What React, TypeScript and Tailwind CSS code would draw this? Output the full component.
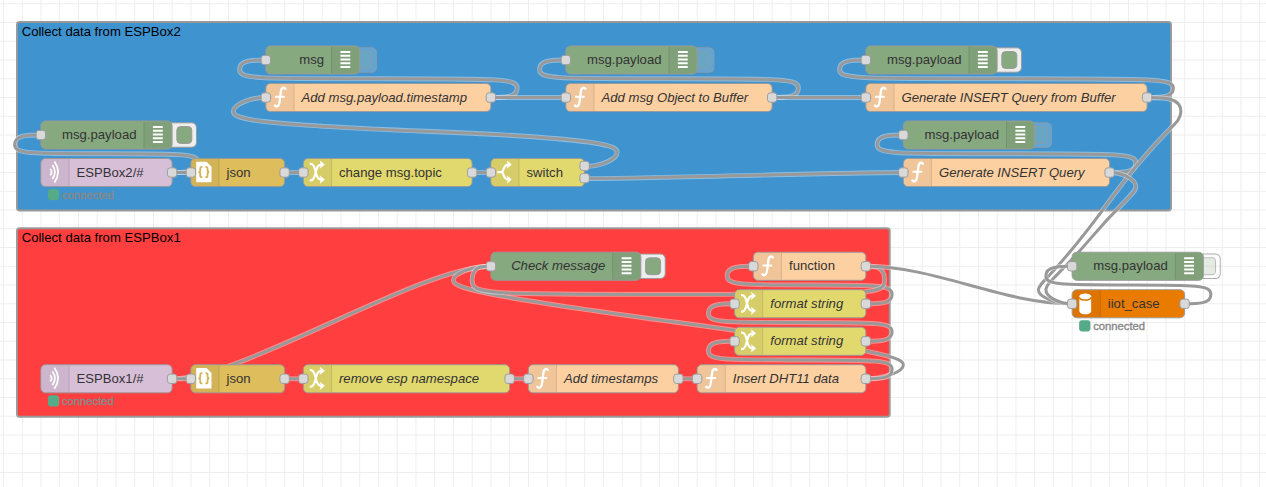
import React from 'react';

type Kind = 'debug' | 'function' | 'mqtt' | 'json' | 'change' | 'switch' | 'db';

interface FlowNode {
  id: string;
  kind: Kind;
  x: number;
  y: number;
  w: number;
  label: string;
  italic?: boolean;
  inputs?: number;
  outputs?: number;
  active?: boolean;
  status?: string;
}

const fills: Record<Kind, string> = {
  debug: 'bg-[#87a980]',
  function: 'bg-[#fdd0a2]',
  mqtt: 'bg-[#d8bfd8]',
  json: 'bg-[#debd5c]',
  change: 'bg-[#e2d96e]',
  switch: 'bg-[#e2d96e]',
  db: 'bg-[#e97b00]',
};

const nodes: FlowNode[] = [
  { id: 'd1', kind: 'debug', x: 280, y: 60, w: 100, label: 'msg', inputs: 1, active: false },
  { id: 'd2', kind: 'debug', x: 600, y: 60, w: 140, label: 'msg.payload', inputs: 1, active: false },
  { id: 'd3', kind: 'debug', x: 920, y: 60, w: 140, label: 'msg.payload', inputs: 1, active: true },
  { id: 'f1', kind: 'function', x: 280, y: 100, w: 240, label: 'Add msg.payload.timestamp', italic: true, inputs: 1, outputs: 1 },
  { id: 'f2', kind: 'function', x: 600, y: 100, w: 220, label: 'Add msg Object to Buffer', italic: true, inputs: 1, outputs: 1 },
  { id: 'f3', kind: 'function', x: 920, y: 100, w: 300, label: 'Generate INSERT Query from Buffer', italic: true, inputs: 1, outputs: 1 },
  { id: 'd4', kind: 'debug', x: 40, y: 140, w: 140, label: 'msg.payload', inputs: 1, active: true },
  { id: 'd5', kind: 'debug', x: 960, y: 140, w: 140, label: 'msg.payload', inputs: 1, active: false },
  { id: 'm2', kind: 'mqtt', x: 40, y: 180, w: 140, label: 'ESPBox2/#', outputs: 1, status: 'connected' },
  { id: 'j2', kind: 'json', x: 200, y: 180, w: 100, label: 'json', inputs: 1, outputs: 1 },
  { id: 'c2', kind: 'change', x: 320, y: 180, w: 180, label: 'change msg.topic', inputs: 1, outputs: 1 },
  { id: 's2', kind: 'switch', x: 520, y: 180, w: 100, label: 'switch', inputs: 1, outputs: 2 },
  { id: 'f4', kind: 'function', x: 960, y: 180, w: 220, label: 'Generate INSERT Query', italic: true, inputs: 1, outputs: 1 },
  { id: 'd6', kind: 'debug', x: 520, y: 280, w: 160, label: 'Check message', italic: true, inputs: 1, active: true },
  { id: 'f5', kind: 'function', x: 800, y: 280, w: 120, label: 'function', inputs: 1, outputs: 1 },
  { id: 'c3', kind: 'change', x: 780, y: 320, w: 140, label: 'format string', italic: true, inputs: 1, outputs: 1 },
  { id: 'c4', kind: 'change', x: 780, y: 360, w: 140, label: 'format string', italic: true, inputs: 1, outputs: 1 },
  { id: 'm1', kind: 'mqtt', x: 40, y: 400, w: 140, label: 'ESPBox1/#', outputs: 1, status: 'connected' },
  { id: 'j1', kind: 'json', x: 200, y: 400, w: 100, label: 'json', inputs: 1, outputs: 1 },
  { id: 'c1', kind: 'change', x: 320, y: 400, w: 220, label: 'remove esp namespace', italic: true, inputs: 1, outputs: 1 },
  { id: 'f6', kind: 'function', x: 560, y: 400, w: 160, label: 'Add timestamps', italic: true, inputs: 1, outputs: 1 },
  { id: 'f7', kind: 'function', x: 740, y: 400, w: 180, label: 'Insert DHT11 data', italic: true, inputs: 1, outputs: 1 },
  { id: 'd7', kind: 'debug', x: 1140, y: 280, w: 140, label: 'msg.payload', inputs: 1, active: false },
  { id: 'db', kind: 'db', x: 1140, y: 320, w: 120, label: 'iiot_case', inputs: 1, outputs: 1, status: 'connected' },
];

// [source, target, output index]
const wires: [string, string, number][] = [
  ['f1', 'd1', 0],
  ['f1', 'f2', 0],
  ['f2', 'd2', 0],
  ['f2', 'f3', 0],
  ['f3', 'd3', 0],
  ['m2', 'd4', 0],
  ['m2', 'j2', 0],
  ['j2', 'c2', 0],
  ['c2', 's2', 0],
  ['s2', 'f1', 0],
  ['s2', 'f4', 1],
  ['f4', 'd5', 0],
  ['m1', 'd6', 0],
  ['m1', 'j1', 0],
  ['j1', 'c1', 0],
  ['c1', 'f6', 0],
  ['f6', 'f7', 0],
  ['f7', 'd6', 0],
  ['f7', 'c4', 0],
  ['c4', 'c3', 0],
  ['c3', 'f5', 0],
  ['f5', 'd6', 0],
  ['f5', 'db', 0],
  ['f3', 'db', 0],
  ['f4', 'db', 0],
  ['db', 'd7', 0],
];

function wirePath(ox: number, oy: number, tx: number, ty: number): string {
  const reach = 100;
  const dx = tx - ox;
  const dy = ty - oy;
  const delta = Math.hypot(dx, dy);
  if (dx > 0) {
    const s = delta < reach ? 0.75 - 0.75 * ((reach - delta) / reach) : 0.75;
    return `M${ox} ${oy} C${ox + reach * s} ${oy} ${tx - reach * s} ${ty} ${tx} ${ty}`;
  }
  const s = 0.4 - 0.2 * Math.max(0, (reach - Math.min(Math.abs(dx), Math.abs(dy))) / reach);
  const midX = Math.floor(tx - dx / 2);
  const midY = dy === 0 ? ty + 30 : Math.floor(ty - dy / 2);
  const h = 15;
  const y1 = (ty + midY) / 2;
  const down = dy > 0;
  const topX = ox + reach * s;
  const topY = down ? Math.min(y1 - dy / 2, oy + h) : Math.max(y1 - dy / 2, oy - h);
  const botX = tx - reach * s;
  const botY = down ? Math.max(y1, ty - h) : Math.min(y1, ty + h);
  const x1 = (ox + topX) / 2;
  const sg = down ? 1 : -1;
  const cp = [
    [x1, oy],
    [topX, down ? Math.max(oy, topY - h) : Math.min(oy, topY + h)],
    [x1, down ? Math.min(midY, topY + h) : Math.max(midY, topY - h)],
    [botX, down ? Math.max(midY, botY - h) : Math.min(midY, botY + h)],
    [(tx + botX) / 2, ty],
  ];
  if (cp[2][1] === topY + sg * h) {
    if (Math.abs(dy) < h * 10) cp[1][1] = topY - (sg * h) / 2;
    cp[3][1] = botY - (sg * h) / 2;
  }
  return `M${ox} ${oy} C${cp[0]} ${cp[1]} ${topX} ${topY} S${cp[2]} ${midX} ${midY} S${cp[3]} ${botX} ${botY} S${cp[4]} ${tx} ${ty}`;
}

const byId = Object.fromEntries(nodes.map((n) => [n.id, n]));

function outputY(n: FlowNode, i: number) {
  return n.outputs === 2 ? n.y - 6.5 + i * 13 : n.y;
}

function Wires() {
  return (
    <svg className="absolute left-0 top-0 overflow-visible" width="1350" height="520" fill="none">
      <g transform="translate(0.5 0.5)">
        {wires.map(([a, b, i], k) => {
          const d = wirePath(byId[a].x + byId[a].w, outputY(byId[a], i), byId[b].x, byId[b].y);
          return (
            <g key={k}>
              <path d={d} stroke="#fff" strokeOpacity="0.4" strokeWidth="5.2" />
              <path d={d} stroke="#999" strokeWidth="3.2" />
            </g>
          );
        })}
      </g>
    </svg>
  );
}

function Icon({ kind }: { kind: Kind }) {
  const common = { width: 30, height: 30, viewBox: '0 0 30 30', fill: 'none', stroke: '#fff', className: 'shrink-0' };
  switch (kind) {
    case 'debug':
      return (
        <svg {...common} strokeWidth="2">
          <path d="M10 7h10.500M10 11h10.500M10 15h10.500M10 19h10.500M10 23h10.500" />
        </svg>
      );
    case 'function':
      return (
        <svg {...common} strokeWidth="2.5">
          <path d="M21.600 6.800C20.400 4.300 17.200 4.200 16.600 8.600L15 20.600C14.400 25.300 11.600 26.400 9.800 23.400" />
          <path d="M10.300 14.700H20.600" strokeWidth="2.200" />
          <circle cx="21.400" cy="6.300" r="1" fill="#fff" stroke="none" />
          <circle cx="10" cy="24" r="1" fill="#fff" stroke="none" />
        </svg>
      );
    case 'mqtt':
      return (
        <svg {...common} strokeWidth="1.900">
          <path d="M10.400 11.500q3.200 3.500 0 7" />
          <path d="M12.700 7.500q5.600 7.500 0 15" />
          <path d="M14.900 3.800q8 11.200 0 22.400" />
        </svg>
      );
    case 'json':
      return (
        <svg {...common}>
          <path d="M6.200 4h11l5.300 5.300v16.700H6.200z" fill="#fff" stroke="none" />
          <path
            d="M12.800 9.500h-.600q-1.700 0-1.700 1.800v1.900q0 1.800-1.900 1.800q1.900 0 1.900 1.800v1.900q0 1.800 1.700 1.800h.600M16 9.500h.600q1.700 0 1.700 1.800v1.900q0 1.800 1.900 1.800q-1.900 0-1.900 1.800v1.900q0 1.800-1.700 1.800H16"
            stroke="#d2b357"
            strokeWidth="1.900"
          />
        </svg>
      );
    case 'change':
      return (
        <svg {...common} strokeWidth="2.300">
          <path d="M7.300 6.200H8.500C12 6.200 12.600 11 13.700 15S15.500 23 19.500 23M7.300 23.800H8.500C12 23.800 12.600 19 13.700 15S15.500 7 19.500 7" />
          <path d="M18 2.600l5.400 4.400-5.400 4.400 1-4.400zM18 18.600l5.400 4.400-5.400 4.400 1-4.400z" fill="#fff" stroke="none" />
        </svg>
      );
    case 'switch':
      return (
        <svg {...common} strokeWidth="2.300">
          <path d="M7.300 15h5.200M19.500 7c-6 0-4.500 5.500-7 8c2.500 2.500 1 8 7 8" />
          <path d="M17.600 2.600l5.200 4.400-5.200 4.400 1-4.400zM17.600 18.600l5.200 4.400-5.200 4.400 1-4.400z" fill="#fff" stroke="none" />
        </svg>
      );
    case 'db':
      return (
        <svg {...common} stroke="none" fill="#fff">
          <ellipse cx="14.500" cy="7.600" rx="6.300" ry="3.100" />
          <path d="M8.200 9.800q1 2.600 6.300 2.600t6.300-2.600v13.900q-1 3-6.300 3t-6.300-3z" />
        </svg>
      );
  }
}

function Port({ x, y }: { x: number; y: number }) {
  return (
    <div
      className="absolute size-[11px] rounded-[3.5px] border border-[#999] bg-[#d9d9d9]"
      style={{ left: x - 5.5, top: y - 5.5 }}
    />
  );
}

function DebugButton({ n }: { n: FlowNode }) {
  return (
    <div
      className={`absolute h-[27px] w-[33px] rounded-[5.5px] border ${n.active ? 'border-[#999] bg-[#eee]' : 'border-[#999]/80 bg-[#eee]/20'}`}
      style={{ left: n.x + n.w - (n.active ? 6.5 : 14.5), top: n.y - 13.5 }}
    >
      <div
        className={`absolute left-[10px] top-[3px] h-[19px] w-[17px] rounded-[4.5px] border ${n.active ? 'border-[#999] bg-[#87a980]' : 'border-[#999]/60 bg-[#87a980]/20'}`}
      />
    </div>
  );
}

function NodeView({ n }: { n: FlowNode }) {
  const right = n.kind === 'debug';
  return (
    <>
      {right && <DebugButton n={n} />}
      <div
        className={`absolute flex h-[31px] overflow-hidden rounded-[5.5px] border border-[#999] ${fills[n.kind]} ${right ? 'flex-row-reverse' : ''}`}
        style={{ left: n.x - 0.5, top: n.y - 15.5, width: n.w + 1 }}
      >
        <div
          className={`flex w-[30px] shrink-0 items-center justify-center bg-black/5 ${right ? 'border-l' : 'border-r'} border-black/10`}
        >
          <Icon kind={n.kind} />
        </div>
        <span
          className={`text-[14px] leading-[29px] whitespace-nowrap text-[#333] ${right ? 'px-[7px]' : 'px-[8px]'} ${n.italic ? 'italic' : ''}`}
        >
          {n.label}
        </span>
      </div>
      {n.inputs && <Port x={n.x} y={n.y} />}
      {Array.from({ length: n.outputs ?? 0 }, (_, i) => (
        <Port key={i} x={n.x + n.w} y={outputY(n, i)} />
      ))}
      {n.status && (
        <div className="absolute flex h-[12px] items-center gap-[3.5px]" style={{ left: n.x + 7.5, top: n.y + 18.2 }}>
          <span className="size-[12px] rounded-[3px] bg-[#5a8]" />
          <span className="pt-[1px] text-[12px] leading-[12px] text-[#888] [-webkit-text-stroke:0.4px_#888]">{n.status}</span>
        </div>
      )}
    </>
  );
}

function Group({ title, box, fill }: { title: string; box: string; fill: string }) {
  return (
    <div className={`absolute rounded-[4px] border-2 border-[#999] ${box} ${fill}`}>
      <span className="block pt-px pl-[4px] text-[14px] leading-[17px] text-black">{title}</span>
    </div>
  );
}

const gridX = Array.from({ length: 68 }, (_, i) => i * 20);
const gridY = Array.from({ length: 27 }, (_, i) => i * 20);

export default function App() {
  return (
    <main className="relative h-[487px] w-[1266px] overflow-hidden bg-white font-['Liberation_Sans',Arial,sans-serif]">
      <div className="absolute left-0 top-0 origin-top-left [transform:translate(2.9px,3.3px)_scale(0.9375)]">
        <svg className="absolute left-0 top-0 overflow-visible" width="1350" height="520" stroke="#eee" strokeWidth="1.07">
          <g transform="translate(0.6 0.4)">
            {gridX.map((x) => (
              <line key={x} x1={x} x2={x} y1="-10" y2="530" />
            ))}
            {gridY.map((y) => (
              <line key={y} x1="-10" x2="1360" y1={y} y2={y} />
            ))}
          </g>
        </svg>
        <Group title="Collect data from ESPBox2" box="left-[14px] top-[19px] h-[203px] w-[1233px]" fill="bg-[#3f93cf]" />
        <Group title="Collect data from ESPBox1" box="left-[14px] top-[239px] h-[203px] w-[933px]" fill="bg-[#ff3f3f]" />
        <Wires />
        {nodes.map((n) => (
          <NodeView key={n.id} n={n} />
        ))}
      </div>
    </main>
  );
}
